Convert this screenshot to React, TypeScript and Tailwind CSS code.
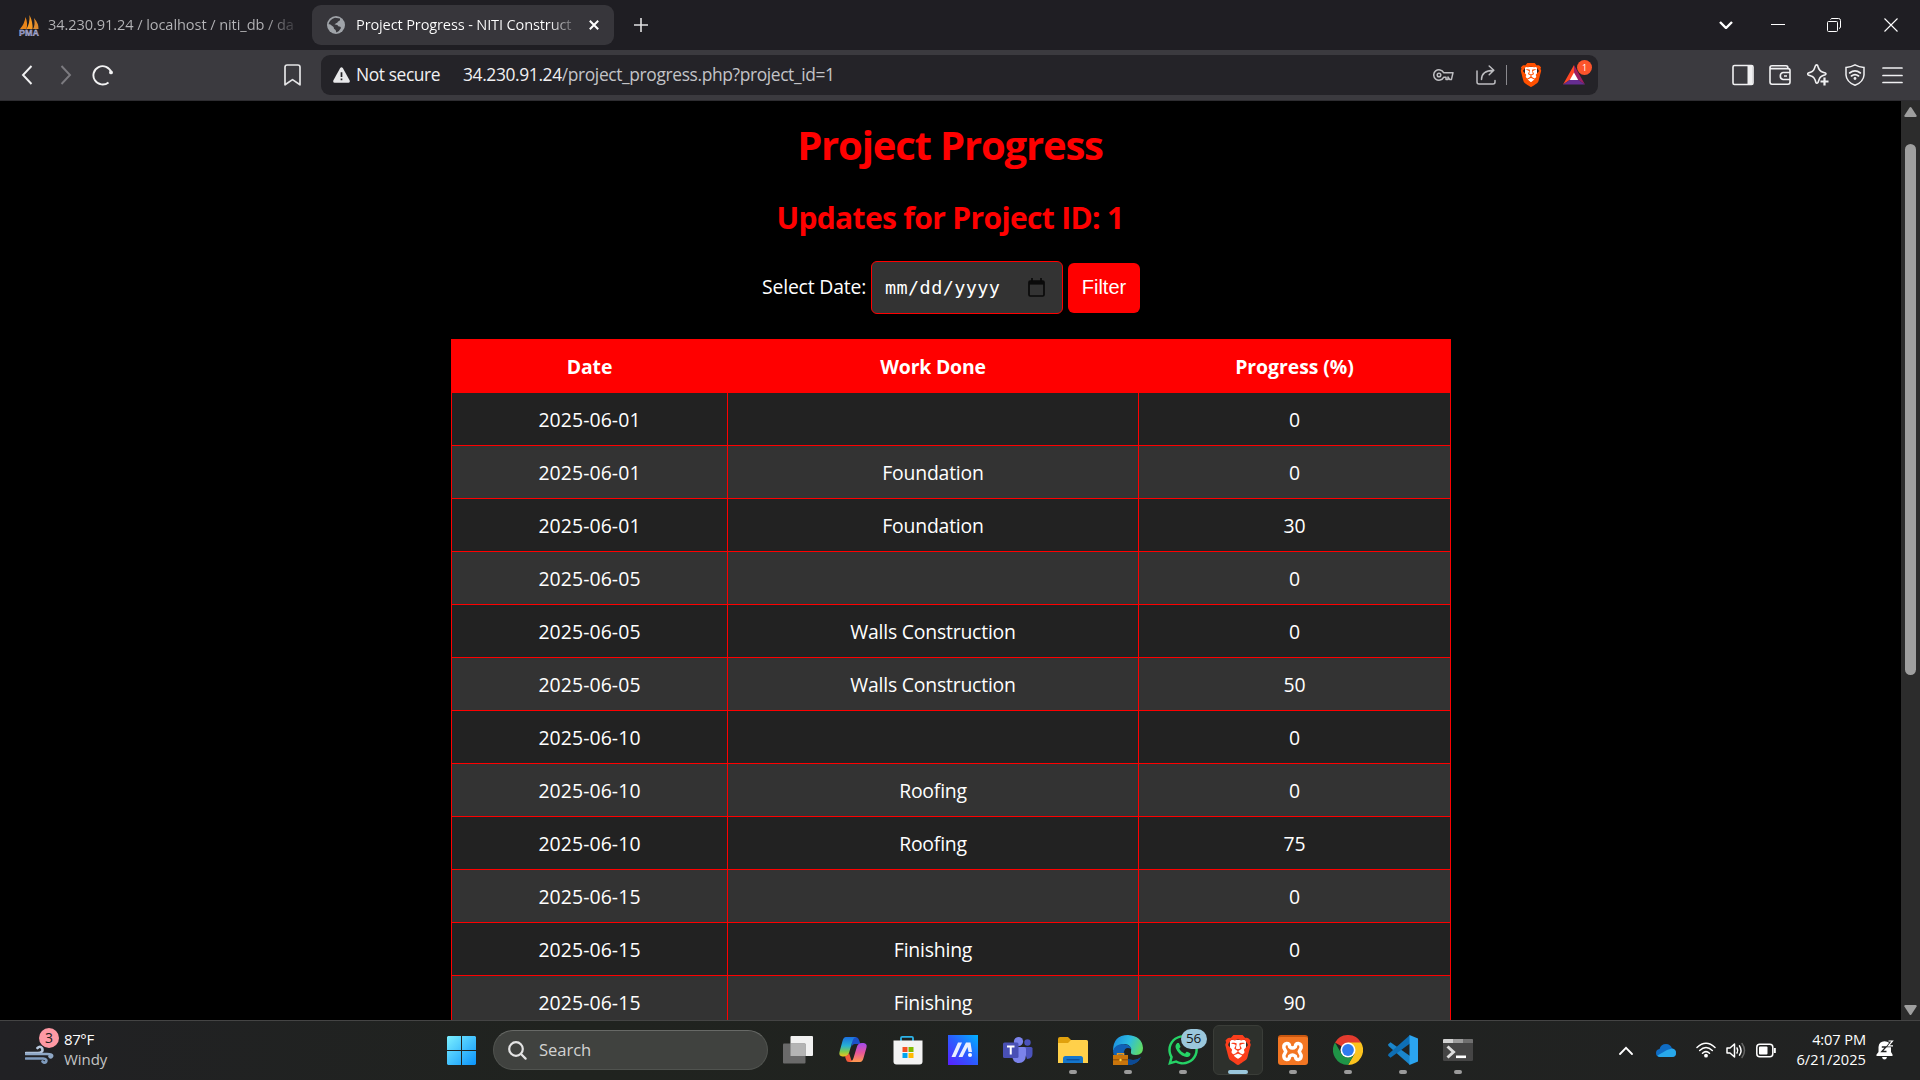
import React from "react";
import { SiBrave } from "react-icons/si";
import { FaWhatsapp } from "react-icons/fa";

const rows: [string, string, string][] = [
  ["2025-06-01", "", "0"],
  ["2025-06-01", "Foundation", "0"],
  ["2025-06-01", "Foundation", "30"],
  ["2025-06-05", "", "0"],
  ["2025-06-05", "Walls Construction", "0"],
  ["2025-06-05", "Walls Construction", "50"],
  ["2025-06-10", "", "0"],
  ["2025-06-10", "Roofing", "0"],
  ["2025-06-10", "Roofing", "75"],
  ["2025-06-15", "", "0"],
  ["2025-06-15", "Finishing", "0"],
  ["2025-06-15", "Finishing", "90"],
];

function TabBar() {
  return (
    <div className="flex h-[50px] shrink-0 items-center bg-[#1f1e23] text-[#e6e6e8]">
      <svg className="ml-[18px] h-[21px] w-[22px] shrink-0" viewBox="0 0 22 21">
        <path d="M2 14 Q6.500 9 7.500 2 Q10 8 8.500 14Z" fill="#e8851a" />
        <path d="M8.500 14 Q12 8 11.500 0 Q15 7 14.500 14Z" fill="#f79a25" />
        <path d="M15 14 Q17.500 10 16 3 Q21 9 20.500 14Z" fill="#dd8a2e" />
        <text x="1" y="20.500" fontSize="9" fontWeight="700" fontFamily="Liberation Sans" fill="#7d82bd" stroke="#c9c9de" strokeWidth=".3" textLength="20" lengthAdjust="spacingAndGlyphs">PMA</text>
      </svg>
      <div className="ml-[8px] w-[247px] overflow-hidden whitespace-nowrap bg-linear-to-r from-[#b5b5b8] from-88% to-[#3a393e] bg-clip-text pb-[2px] text-[14.6px] leading-5 tracking-[-0.09px] text-transparent">
        34.230.91.24 / localhost / niti_db / da
      </div>
      <div className="ml-[17px] flex h-10 w-[302px] shrink-0 items-center rounded-[9px] bg-[#37363b]">
        <svg className="ml-[15px] size-[18px] shrink-0" viewBox="0 0 18 18">
          <circle cx="9" cy="9" r="9" fill="#a0a4a9" />
          <path d="M8 1.8 L13 2.5 Q13.5 5 11 5.4 Q10.5 7 9 7.2 L7.5 8.4 Q11 8.2 11.3 10.2 Q14 10.4 14 12 Q12.6 15 9.4 16.6 L8.6 14 Q6.4 13 6.6 11 L3 8.2 Q1.6 8.4 1.6 8 Q2.6 3.6 8 1.8Z" fill="#37363b" />
        </svg>
        <div className="ml-[11px] w-[219px] overflow-hidden whitespace-nowrap bg-linear-to-r from-white from-88% to-[#5a595e] bg-clip-text pb-[2px] text-[14.6px] leading-5 tracking-[-0.15px] text-transparent">
          Project Progress - NITI Construct
        </div>
        <svg className="ml-[14px] size-[10px]" viewBox="0 0 10 10" stroke="#fff" strokeWidth="2">
          <path d="M.8 .8 L9.2 9.2 M9.2 .8 L.8 9.2" />
        </svg>
      </div>
      <svg className="ml-[20px] size-[14px]" viewBox="0 0 14 14" stroke="#e0e0e2" strokeWidth="1.6">
        <path d="M7 0 V14 M0 7 H14" />
      </svg>
      <svg className="mr-[38px] ml-auto h-[8px] w-[14px]" viewBox="0 0 14 8" fill="none" stroke="#fff" strokeWidth="2.4">
        <path d="M1 1 L7 7 L13 1" />
      </svg>
      <svg className="mr-[42px] h-[14px] w-[14px]" viewBox="0 0 14 14" stroke="#fff">
        <path d="M0 6.5 H14" />
      </svg>
      <svg className="mr-[43px] size-[14px]" viewBox="0 0 14 14" fill="none" stroke="#fff">
        <rect x=".5" y="3.5" width="10" height="10" rx="1" />
        <path d="M3.5 1.5 Q4 .5 5 .5 H11.5 Q13.5 .5 13.5 2.5 V9 Q13.5 10 12 10.5" />
      </svg>
      <svg className="mr-[22px] size-[14px]" viewBox="0 0 14 14" stroke="#fff" strokeWidth="1.1">
        <path d="M.5 .5 L13.5 13.5 M13.5 .5 L.5 13.5" />
      </svg>
    </div>
  );
}

function Toolbar() {
  return (
    <div className="flex h-[51px] shrink-0 items-center border-b border-[#2e2d31] bg-[#3b3a3f]">
      <svg className="ml-[21px] h-[20px] w-[12px]" viewBox="0 0 12 20" fill="none" stroke="#f2f2f3" strokeWidth="1.9">
        <path d="M10.5 1 L2 10 L10.5 19" />
      </svg>
      <svg className="ml-[27px] h-[20px] w-[12px]" viewBox="0 0 12 20" fill="none" stroke="#7c7b80" strokeWidth="1.9">
        <path d="M1.5 1 L10 10 L1.5 19" />
      </svg>
      <svg className="ml-[20px] size-[22px]" viewBox="0 0 22 22" fill="none" stroke="#f2f2f3" strokeWidth="1.9">
        <path d="M16.5 18.4 A9.2 9.2 0 1 1 19.3 8.3" />
        <circle cx="19" cy="8.4" r="1.9" fill="#f2f2f3" stroke="none" />
      </svg>
      <svg className="ml-[170px] h-[22px] w-[17px]" viewBox="0 0 17 22" fill="none" stroke="#e4e4e6" strokeWidth="1.7" strokeLinejoin="round">
        <path d="M1 3.2 Q1 1 3.2 1 H13.8 Q16 1 16 3.2 V20.8 L8.5 15.6 L1 20.8Z" />
      </svg>
      <div className="ml-[20px] flex h-10 w-[1277px] items-center rounded-[9px] bg-[#242328] text-[17.4px]">
        <svg className="ml-[12px] h-[16px] w-[17px]" viewBox="0 0 17 16">
          <path d="M7.2 1 Q8.5 -.6 9.8 1 L16.7 13.6 Q17 15.6 15.4 15.8 H1.6 Q0 15.6 .3 13.6Z" fill="#e8e8ea" />
          <path d="M8.5 5.2 V10 M8.5 11.4 V13.3" stroke="#242328" strokeWidth="1.7" />
        </svg>
        <span className="ml-[6px] w-[107px] pb-px whitespace-nowrap tracking-[-0.4px] text-[#f0f0f2]">Not secure</span>
        <span className="pb-px whitespace-nowrap tracking-[-0.37px] text-[#c3c3c7]">
          <span className="text-[#f0f0f2]">34.230.91.24</span>/project_progress.php?project_id=1
        </span>
        <svg className="ml-auto h-[14px] w-[21px]" viewBox="0 0 21 14" fill="none" stroke="#bdbdc1" strokeWidth="1.5" strokeLinejoin="round">
          <path d="M10.6 4.7 A5.2 5.2 0 1 0 10.6 9.3 H13 V11.6 H15 V9 L16.8 11.6 H18.4 L20 4.7Z" />
          <circle cx="6" cy="7" r="1.8" />
        </svg>
        <svg className="ml-[22px] size-[20px]" viewBox="0 0 20 20" fill="none" stroke="#bdbdc1" strokeWidth="1.5" strokeLinecap="round" strokeLinejoin="round">
          <path d="M1 6 V17 Q1 19 3 19 H17 Q19 19 19 17 V15.5 M5.5 14.5 Q5.5 5.5 17.5 5.2 M13.2 1 L17.8 5.2 L13.2 9.8" />
        </svg>
        <div className="ml-[10px] h-[20px] w-px bg-[#8a898e]" />
        <span className="relative ml-[14px] flex h-[24px] w-[20px] items-center justify-center">
          <span className="absolute inset-[4px] rounded-b-lg bg-white" />
          <SiBrave className="relative size-[24px] shrink-0 text-[#ff5000]" />
        </span>
        <div className="relative mr-[13px] ml-[22px] h-[20px] w-[22px]">
          <svg className="size-full" viewBox="0 0 22 20">
            <path d="M11 0 L0 19.5 L11 12Z" fill="#ff4724" />
            <path d="M11 0 L22 19.5 L11 12Z" fill="#9e1f63" />
            <path d="M0 19.5 L22 19.5 L11 12Z" fill="#662d91" />
            <path d="M11 7.5 L15.2 15 H6.8Z" fill="#fff" />
          </svg>
          <span className="absolute top-[-5px] left-[14px] flex size-[15px] items-center justify-center rounded-full bg-[#fb542b] text-[9px] leading-none text-white">1</span>
        </div>
      </div>
      <svg className="ml-[134px] size-[22px]" viewBox="0 0 22 22" fill="none" stroke="#f0f0f2" strokeWidth="1.6">
        <rect x="1" y="1.5" width="20" height="19" rx="1.5" />
        <path d="M18 1.5 V20.5" strokeWidth="5" />
      </svg>
      <svg className="ml-[15px] size-[22px]" viewBox="0 0 22 22" fill="none" stroke="#f0f0f2" strokeWidth="1.6" strokeLinejoin="round">
        <path d="M1 3.5 Q1 1.8 3 1.8 H17 Q19 1.8 19 4.4 M1 3.5 V18 Q1 20.2 3 20.2 H19 Q21 20.2 21 18 V6.6 Q21 4.6 19 4.6 H3 Q1 4.6 1 3.5 M21 8.5 H14 Q11.3 9 11.3 12 Q11.3 15 14 15.5 H21 M15 12 H18" />
      </svg>
      <svg className="ml-[16px] size-[22px]" viewBox="0 0 22 22" fill="none" stroke="#f0f0f2" strokeWidth="1.6" strokeLinejoin="round">
        <path d="M9.5 .9 Q10.7 .9 11 2.5 Q12 7 16 8.2 L18.3 9 Q19.6 9.7 18.3 10.8 Q13.5 12 12.3 15 L11 18.5 Q9.8 20 8.9 18.5 Q7.5 12.9 4.2 12 L1.2 10.9 Q.2 9.9 1.2 9 Q6.4 7.8 7.3 4.8 L8.3 2 Q8.7 .9 9.5 .9Z" />
        <path d="M17.5 13.5 V21.5 M13.5 17.5 H21.5" strokeWidth="2.2" />
      </svg>
      <svg className="ml-[15px] size-[22px]" viewBox="0 0 22 22" fill="none" stroke="#f0f0f2" strokeWidth="1.6" strokeLinecap="round">
        <path d="M11 .8 Q15 3 20 3.4 V11 Q19.5 18 11 21.300 Q2.5 18 2 11 V3.4 Q7 3 11 .8Z" strokeWidth="1.5" />
        <path d="M5.6 9 Q11 4.8 16.4 9 M7.4 12 Q11 9.2 14.6 12" />
        <circle cx="11" cy="14.5" r="1.4" fill="#f0f0f2" stroke="none" />
      </svg>
      <svg className="ml-[16px] h-[18px] w-[21px]" viewBox="0 0 21 18" stroke="#f0f0f2" strokeWidth="1.7" strokeLinecap="round">
        <path d="M1 2 H20 M1 9.5 H20 M1 16.5 H20" />
      </svg>
    </div>
  );
}

function ProgressPage() {
  return (
    <div className="flex min-h-0 flex-1 bg-black text-white">
      <main className="flex w-[1901px] flex-col items-center overflow-hidden pl-px">
        <h1 className="mt-[14px] mr-[2px] h-[60px] text-[40px] leading-[60px] font-bold tracking-[-1.17px] whitespace-nowrap text-[#ff0000]">Project Progress</h1>
        <h2 className="mt-[23px] mr-[2px] h-[40px] text-[30px] leading-[40px] font-bold tracking-[-0.66px] whitespace-nowrap text-[#ff0000]">Updates for Project ID: 1</h2>
        <form className="mt-[23px] flex h-[54px] w-[378px] items-center text-[20px]">
          <label className="w-[109px] shrink-0 pb-px text-[19.4px] tracking-[-0.18px] whitespace-nowrap">Select Date:</label>
          <div className="flex h-[53px] w-[192px] shrink-0 items-center rounded-[6px] border border-[#ff0000] bg-[#333333]">
            <span className="ml-[13px] font-['DejaVu_Sans_Mono',monospace] text-[18.5px] tracking-[0.4px]">mm/dd/yyyy</span>
            <svg className="mr-[17px] ml-auto h-[19px] w-[17px]" viewBox="0 0 17 19" fill="none" stroke="#0a0a0a" strokeWidth="1.7">
              <rect x="1" y="3" width="15" height="15" rx="1.2" />
              <path d="M1 4.8 H16" strokeWidth="3.6" />
              <path d="M4 0 V4 M13 0 V4" />
            </svg>
          </div>
          <button type="button" className="ml-[5px] h-[50px] w-[72px] shrink-0 rounded-[6px] bg-[#ff0000] pb-[2px] font-['Liberation_Sans',sans-serif] text-[20px]">Filter</button>
        </form>
        <table className="mt-[25px] w-[1000px] shrink-0 table-fixed border-collapse text-center text-[19.4px] leading-7 tracking-[-0.2px]">
          <colgroup>
            <col className="w-[276px]" />
            <col className="w-[411px]" />
            <col />
          </colgroup>
          <thead>
            <tr className="h-[53px] bg-[#ff0000]">
              <th className="border border-[#ff0000] px-0 pt-[2px] pb-0 tracking-[-0.1px]">Date</th>
              <th className="border border-[#ff0000] px-0 pt-[2px] pb-0">Work Done</th>
              <th className="border border-[#ff0000] px-0 pt-[2px] pb-0 tracking-[-0.05px]">Progress (%)</th>
            </tr>
          </thead>
          <tbody>
            {rows.map(([date, work, progress], i) => (
              <tr key={i} className="h-[53px] odd:bg-[#222222] even:bg-[#333333]">
                <td className="border border-[#ff0000] px-0 pt-[2px] pb-0 tracking-[0.1px]">{date}</td>
                <td className="border border-[#ff0000] px-0 pt-[2px] pb-0">{work}</td>
                <td className="border border-[#ff0000] px-0 pt-[2px] pb-0">{progress}</td>
              </tr>
            ))}
          </tbody>
        </table>
      </main>
      <div className="flex w-[19px] flex-col items-center bg-[#2c2c2c]">
        <svg className="mt-[6px] h-[10px] w-[13px]" viewBox="0 0 13 10" fill="#9f9f9f">
          <path d="M5.6 .6 Q6.5 -.4 7.4 .6 L12.6 8.4 Q13 10 11.6 10 H1.4 Q0 10 .4 8.4Z" />
        </svg>
        <div className="mt-[27px] h-[531px] w-[11px] rounded-full bg-[#9f9f9f]" />
        <svg className="mt-auto mb-[5px] h-[10px] w-[13px]" viewBox="0 0 13 10" fill="#9f9f9f">
          <path d="M5.6 9.4 Q6.5 10.4 7.4 9.4 L12.6 1.6 Q13 0 11.6 0 H1.4 Q0 0 .4 1.6Z" />
        </svg>
      </div>
    </div>
  );
}

function Slot({ children, running, active }: { children: React.ReactNode; running?: boolean; active?: boolean }) {
  return (
    <div className="flex w-[55px] shrink-0 justify-center">
      <div className={active ? "relative flex size-[50px] items-center justify-center rounded-[6px] border border-[#3a3d38] bg-[#2d302c]" : "relative flex size-[50px] items-center justify-center"}>
        {children}
        {running && <span className="absolute bottom-px h-[4px] w-[8px] rounded-full bg-[#9b9b9b]" />}
        {active && <span className="absolute bottom-0 h-[4px] w-[20px] rounded-full bg-[#9ac7dc]" />}
      </div>
    </div>
  );
}

function Taskbar() {
  return (
    <div className="flex h-[60px] shrink-0 items-center border-t border-[#444444] bg-linear-to-r from-[#212124] via-[#20231f] via-30% to-[#212222] pb-px text-white">
      <div className="relative ml-[25px] h-[32px] w-[29px] shrink-0">
        <svg className="size-full" viewBox="0 0 29 32" fill="none" stroke="#8fa8c6" strokeWidth="2.4" strokeLinecap="round">
          <path d="M1 19 H13 Q19 18.500 17 14 Q15 11.500 12.500 14" stroke="#b9c9de" strokeWidth="2.600" />
          <path d="M1 20 H22 Q28 20 27 22.500 Q26 24.500 24.500 22.500" strokeWidth="2.600" />
          <path d="M1 24.500 H18 Q22.500 25 21 28 Q19.500 29.500 17.500 27.500" stroke="#7f9bbd" strokeWidth="2.600" />
        </svg>
        <span className="absolute top-[-6px] left-[14px] flex size-[20px] items-center justify-center rounded-full bg-[#ff99a4] text-[14px] leading-none text-[#202020]">3</span>
      </div>
      <div className="ml-[10px] w-[383px] pb-[2px] text-[15px] leading-[20px] tracking-[-0.05px]">
        <div className="tracking-[-0.4px]">87°F</div>
        <div className="text-[#c4c4c4]">Windy</div>
      </div>
      <svg className="size-[29px] shrink-0" viewBox="0 0 29 29">
        <defs>
          <linearGradient id="win" x1="0" y1="0" x2="1" y2="1" gradientUnits="objectBoundingBox">
            <stop offset="0" stopColor="#7cf0ff" />
            <stop offset="1" stopColor="#0a93fb" />
          </linearGradient>
        </defs>
        <path d="M1 0 H14 V14 H0 V1Z M15 0 H28 L29 1 V14 H15Z M0 15 H14 V29 H1 L0 28Z M15 15 H29 V28 L28 29 H15Z" fill="url(#win)" />
      </svg>
      <div className="ml-[17px] flex h-10 w-[275px] shrink-0 items-center rounded-full border border-[#50534f] border-t-[#676966] bg-[#40423f]">
        <svg className="ml-[14px] size-[19px]" viewBox="0 0 19 19" fill="none" stroke="#e4e4e4" strokeWidth="2.2" strokeLinecap="round">
          <circle cx="8" cy="8" r="6.8" />
          <path d="M13 13 L17.6 17.6" />
        </svg>
        <span className="ml-[12px] pt-px text-[16.6px] tracking-[-0.05px] text-[#d2d2d2]">Search</span>
      </div>
      <div className="ml-[2px] flex">
        <Slot>
          <svg className="size-[30px]" viewBox="0 0 30 30">
            <rect x="7.5" y="1" width="22.5" height="20" rx="1" fill="#f1f1f1" />
            <rect x="0" y="8.5" width="22.5" height="20" rx="1" fill="#6a6a6a" />
            <rect x="7.5" y="8.5" width="15" height="12.5" fill="#b4b4b4" />
          </svg>
        </Slot>
        <Slot>
          <svg className="size-[30px]" viewBox="0 0 30 30">
            <defs>
              <linearGradient id="cpa" x1="0" y1="0" x2="0" y2="1">
                <stop offset="0" stopColor="#1c6fe0" />
                <stop offset=".45" stopColor="#27b0d4" />
                <stop offset=".75" stopColor="#7ecb4e" />
                <stop offset="1" stopColor="#f2c21b" />
              </linearGradient>
              <linearGradient id="cpb" x1="0" y1="0" x2="0" y2="1">
                <stop offset="0" stopColor="#a24bf0" />
                <stop offset=".5" stopColor="#e6559c" />
                <stop offset="1" stopColor="#ff9a4d" />
              </linearGradient>
            </defs>
            <path d="M17 2 Q20 2 21 5 L22.5 9 H17 Q14.5 9 13.5 12 L14 4Z" fill="#1b50c8" />
            <path d="M8 2 H18.500 Q15.500 2.500 14.500 6 L11 18 Q10 21.500 6 21.500 H4.500 Q.5 21 1.500 17 L4.500 6 Q5.500 2 8 2Z" fill="url(#cpa)" />
            <path d="M7 21.500 Q10 21 11 18 L12 21 Q12.500 25 15.500 27 H11 Q8.500 27 8 24.500Z" fill="#f0593a" />
            <path d="M22 27 H11.500 Q14.500 26.500 15.500 23 L19 11.500 Q20 8 24 8 H25.500 Q29.500 8.500 28.500 12.500 L25.500 23 Q24.500 27 22 27Z" fill="url(#cpb)" />
          </svg>
        </Slot>
        <Slot>
          <svg className="size-[30px]" viewBox="0 0 30 30">
            <path d="M8 7 V3 Q8 1.800 9.200 1.800 H18.800 Q20 1.800 20 3 V7" fill="none" stroke="#2db4e8" strokeWidth="1.800" />
            <path d="M.5 5.500 H29.500 V26.500 Q29.500 29.500 26.500 29.500 H3.500 Q.5 29.500 .5 26.500Z" fill="#f3f3f3" />
            <path d="M9.500 12 H14.500 V17 H9.500Z" fill="#f25022" />
            <path d="M15.500 12 H20.500 V17 H15.500Z" fill="#7fba00" />
            <path d="M9.500 18 H14.500 V23 H9.500Z" fill="#00a4ef" />
            <path d="M15.500 18 H20.500 V23 H15.500Z" fill="#ffb900" />
          </svg>
        </Slot>
        <Slot>
          <svg className="size-[30px]" viewBox="0 0 30 30">
            <defs>
              <linearGradient id="asus" x1="0" y1="1" x2="1" y2="0">
                <stop offset="0" stopColor="#5a1fff" />
                <stop offset=".5" stopColor="#2b5cff" />
                <stop offset="1" stopColor="#00b4ff" />
              </linearGradient>
            </defs>
            <rect width="30" height="30" fill="url(#asus)" />
            <path d="M3.500 22 L10 7.500 H14 L7.500 22Z M10.500 22 L18 7.500 H22.500 L24 17 H20.500 L19.500 12 L14.500 22Z" fill="#e9eeff" />
            <circle cx="22" cy="20" r="2" fill="#fff" />
          </svg>
        </Slot>
        <Slot>
          <svg className="size-[30px]" viewBox="0 0 30 30">
            <circle cx="24.500" cy="7.500" r="3.200" fill="#4b53bc" />
            <path d="M20 12 H28 Q29.500 12 29.500 13.500 V19 Q29.500 23.500 24 24Z" fill="#4b53bc" />
            <circle cx="15.500" cy="6.500" r="4.600" fill="#7b83eb" />
            <path d="M9.500 12 H21 Q23 12 23 14 V20 Q22.500 28 16 28 Q9.500 28 9 20Z" fill="#7b83eb" />
            <rect x="0" y="7.500" width="15.500" height="15.500" rx="1.500" fill="#4950b5" />
            <path d="M4 11.500 H11.500 M7.750 11.500 V19.500" stroke="#fff" strokeWidth="2" />
          </svg>
        </Slot>
        <Slot running>
          <svg className="size-[30px]" viewBox="0 0 30 30">
            <path d="M0 4 Q0 2 2 2 H10 L13 5 V10 H0Z" fill="#e0a10d" />
            <path d="M0 8 H10 L13 5 H28.500 Q30 5 30 6.500 V28 H0Z" fill="#ffd04a" />
            <path d="M5 28 V23.500 Q5 21 7.500 21 H22.500 Q25 21 25 23.500 V28Z" fill="#1476cc" />
            <path d="M8.500 24.700 H21.500" stroke="#0a4f9c" strokeWidth="1.400" />
          </svg>
        </Slot>
        <Slot running>
          <svg className="size-[30px]" viewBox="0 0 30 30">
            <defs>
              <linearGradient id="edge" x1="0" y1=".3" x2="1" y2=".6">
                <stop offset="0" stopColor="#1b8fe0" />
                <stop offset=".5" stopColor="#2dbde0" />
                <stop offset="1" stopColor="#62dd62" />
              </linearGradient>
            </defs>
            <path d="M0 16 Q0 0 15 0 Q29 1 30 13 Q30 20 23 20 Q17 20 18 16.500 Q19 10 12 9 Q4 9 0 16Z" fill="url(#edge)" />
            <path d="M0 16 Q2 9 10 9 Q17 9.500 18.500 14 Q12 11 11 17 Q11 25 20 25 Q25 25 28 22 Q24 30 15 30 Q1 29 0 16Z" fill="#1160b5" />
            <path d="M11 17 Q11.500 25 20 25 Q25 25 28 22 Q24 30 15 30 Q9 26 9.500 19Z" fill="#0c4a94" />
            <rect x="0" y="20" width="15" height="10" fill="#c9750c" />
            <path d="M4.500 20 V18.800 H10.500 V20" stroke="#e69a20" strokeWidth="1.400" fill="none" />
            <path d="M0 24.800 H15" stroke="#8c4a06" />
            <circle cx="7.500" cy="25" r="1.200" fill="#ffd23c" />
          </svg>
        </Slot>
        <Slot running>
          <FaWhatsapp className="size-[34px] shrink-0 text-[#25d366]" />
          <span className="absolute top-[4px] left-[23px] flex h-[20px] w-[26px] items-center justify-center rounded-full bg-[#9ac7dc] text-[13.500px] leading-none tracking-[-0.2px] text-[#151515]">56</span>
        </Slot>
        <Slot active>
          <span className="absolute inset-x-[16px] inset-y-[14px] rounded-b-xl bg-white" />
          <SiBrave className="relative size-[30px] shrink-0 text-[#fb3e1c]" />
        </Slot>
        <Slot running>
          <div className="flex size-[30px] items-center justify-center rounded-[3px] border-t-2 border-[#c9570f] bg-[#f37623]">
            <svg className="size-[23px]" viewBox="0 0 24 24" fill="none" stroke="#fff" strokeWidth="3.600" strokeLinejoin="round">
              <path d="M6 3.500 Q9 3.500 9 7 Q12 10 15 7 Q15 3.500 18 3.500 Q21.500 4 21 8 L19 12 L21 16 Q21.500 20 18 20.500 Q15 20.500 15 17 Q12 14 9 17 Q9 20.500 6 20.500 Q2.500 20 3 16 L5 12 L3 8 Q2.500 4 6 3.500Z" />
            </svg>
          </div>
        </Slot>
        <Slot running>
          <svg className="size-[30px]" viewBox="0 0 30 30">
            <path d="M15 15 L2 7.500 A15 15 0 0 1 28 7.500Z" fill="#e33b2e" />
            <path d="M15 7.500 H28 A15 15 0 0 1 15 30 L21.500 18.750Z" fill="#fcc31e" />
            <path d="M2 7.500 L8.500 18.750 A7.500 7.500 0 0 0 21.500 18.750 L15 30 A15 15 0 0 1 2 7.500Z" fill="#1f9447" />
            <circle cx="15" cy="15" r="7.500" fill="#fff" />
            <circle cx="15" cy="15" r="5.900" fill="#2f7bf0" />
          </svg>
        </Slot>
        <Slot running>
          <svg className="size-[30px]" viewBox="0 0 30 30">
            <path d="M0 9.500 L2.500 7.200 L22 21 V30 L.5 11Z" fill="#1a86cc" />
            <path d="M0 20.500 L2.500 22.800 L22 8.500 V0 L.5 19Z" fill="#0e6fb5" />
            <path d="M21.500 0 L30 3.500 V26.500 L21.500 30Z" fill="#2ba4ef" />
          </svg>
        </Slot>
        <Slot running>
          <svg className="size-[30px]" viewBox="0 0 30 30">
            <rect x="0" y="4" width="30" height="22" rx="1.200" fill="#454545" />
            <path d="M0 8 V5 Q0 4 1.200 4 H10 V8Z" fill="#d2d2d2" />
            <path d="M10 4 H20 V8 H10Z" fill="#9c9c9c" />
            <path d="M20 4 H29 Q30 4 30 5 V8 H20Z" fill="#6f6f6f" />
            <path d="M4.500 11.500 L10.500 17 L4.500 22.500" stroke="#dcdcdc" strokeWidth="3" fill="none" />
            <path d="M13 21.800 H23" stroke="#fff" strokeWidth="2.600" />
          </svg>
        </Slot>
      </div>
      <svg className="ml-auto h-[9px] w-[14px]" viewBox="0 0 14 9" fill="none" stroke="#fff" strokeWidth="1.800" strokeLinecap="round">
        <path d="M1 8 L7 1.800 L13 8" />
      </svg>
      <svg className="ml-[23px] h-[13px] w-[20px]" viewBox="0 0 20 13">
        <path d="M3.500 5 Q5 0 10 0 Q14.500 0 16 4.500 Q20 5 20 9 Q20 13 16 13 H4 Q0 13 0 9 Q0 5.500 3.500 5Z" fill="#0f6cc4" />
        <path d="M1.500 11.500 L11 6 L16 4.500 Q20 5 20 9 Q20 13 16 13 H4 Q2.500 13 1.500 11.500Z" fill="#28a8ea" />
      </svg>
      <svg className="ml-[20px] h-[16px] w-[20px]" viewBox="0 0 20 16" fill="none" stroke="#fff" strokeWidth="1.500" strokeLinecap="round">
        <path d="M1 5.500 Q10 -3 19 5.500 M3.700 8.500 Q10 2.500 16.300 8.500 M6.500 11.300 Q10 8 13.500 11.300" />
        <circle cx="10" cy="13.700" r="1.900" fill="#fff" stroke="none" />
      </svg>
      <svg className="ml-[10px] h-[17px] w-[20px]" viewBox="0 0 20 17" fill="none" stroke="#fff" strokeWidth="1.500" strokeLinejoin="round" strokeLinecap="round">
        <path d="M1 6 H4 L8.500 2 V15 L4 11 H1Z M11 6 Q12.500 8.500 11 11 M13.500 3.800 Q16.500 8.500 13.500 13.200" />
        <path d="M16 1.500 Q21 8.500 16 15.500" stroke="#666" />
      </svg>
      <svg className="ml-[10px] h-[15px] w-[20px]" viewBox="0 0 20 15" fill="none" stroke="#fff" strokeWidth="1.500">
        <rect x=".8" y="1.200" width="16" height="12.600" rx="3" />
        <rect x="3" y="3.500" width="8.500" height="8" rx="1" fill="#fff" stroke="none" />
        <path d="M18.800 5 V10" strokeWidth="2" />
      </svg>
      <div className="w-[90px] pb-[2px] text-right text-[14.6px] leading-[20px] tracking-[0.05px] whitespace-nowrap">
        <div className="tracking-[-0.1px]">4:07 PM</div>
        <div>6/21/2025</div>
      </div>
      <svg className="mr-[26px] ml-[10px] h-[20px] w-[18px]" viewBox="0 0 18 20">
        <path d="M2.500 7 Q3 1.500 8.500 1.300 Q14.500 1.500 15 7 V12 L16.500 14.500 V16 H.5 V14.500 L2.500 12Z" fill="#fff" />
        <path d="M6 17 H11 Q10.500 19.500 8.500 19.500 Q6.500 19.500 6 17Z" fill="#fff" />
        <path d="M5.800 7 H10 L5.800 11.500 H10.500" fill="none" stroke="#212222" strokeWidth="1.300" />
        <path d="M12.500 .8 H16.500 L12.500 5.800 H17" fill="none" stroke="#212222" strokeWidth="2.800" />
        <path d="M12.500 1 H16.500 L12.500 5.800 H17" fill="none" stroke="#fff" strokeWidth="1.200" />
      </svg>
    </div>
  );
}

export default function App() {
  return (
    <div className="flex h-[1080px] w-[1920px] flex-col overflow-hidden bg-black font-['Open_Sans','Noto_Sans',sans-serif]">
      <TabBar />
      <Toolbar />
      <ProgressPage />
      <Taskbar />
    </div>
  );
}
